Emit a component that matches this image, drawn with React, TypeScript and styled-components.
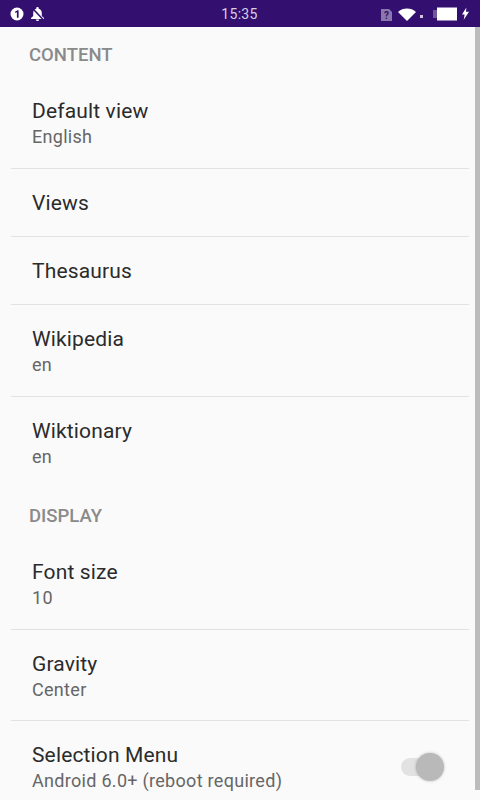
import React from "react";
import styled, { createGlobalStyle } from "styled-components";

const Global = createGlobalStyle`
  html, body { margin: 0; padding: 0; background: #fafafa; }
  body { font-family: Roboto, "Liberation Sans", sans-serif; }
`;

const Screen = styled.div`
  position: relative;
  width: 480px;
  height: 800px;
  overflow: hidden;
  background: #fafafa;
`;

const StatusBar = styled.header`
  height: 27px;
  background: #330f70;
  color: #fff;
  display: grid;
  grid-template-columns: 1fr auto 1fr;
  align-items: center;
  padding: 0 11px 0 10px;
  box-sizing: border-box;
`;

const StatusGroup = styled.div<{ $end?: boolean }>`
  display: flex;
  align-items: center;
  justify-content: ${(p) => (p.$end ? "flex-end" : "flex-start")};
`;

const Clock = styled.span`
  font-size: 14px;
  color: #d6cfe4;
  letter-spacing: 0.3px;
`;

const List = styled.main`
  display: flex;
  flex-direction: column;
`;

const SectionHeader = styled.h2`
  margin: 0;
  height: 50px;
  box-sizing: border-box;
  padding: 5px 0 0 29px;
  display: flex;
  align-items: center;
  font-size: 18.5px;
  font-weight: 500;
  color: #8a8a8a;
`;

const Row = styled.div<{ $height: number; $last?: boolean }>`
  height: ${(p) => p.$height}px;
  box-sizing: border-box;
  margin: 0 11px;
  padding: 23px 32px 0 21px;
  display: flex;
  align-items: flex-start;
  justify-content: space-between;
  border-bottom: ${(p) => (p.$last ? "none" : "1px solid #e2e2e2")};
`;

const RowText = styled.div`
  display: flex;
  flex-direction: column;
  gap: 4px;
`;

const Title = styled.div`
  font-size: 21px;
  line-height: 22px;
  color: #2b2b2b;
  letter-spacing: 0.15px;
`;

const Subtitle = styled.div`
  font-size: 18px;
  line-height: 22px;
  color: #666;
  letter-spacing: 0.3px;
`;

const Toggle = styled.div`
  position: relative;
  margin-top: 14px;
  width: 36px;
  height: 18px;
  border-radius: 9px;
  background: #e2e2e2;
`;

const Knob = styled.div`
  position: absolute;
  right: -7px;
  top: -5px;
  width: 28px;
  height: 28px;
  border-radius: 50%;
  background: #b9b9b9;
  box-shadow: 0 0 3px rgba(0, 0, 0, 0.25);
`;

const Scrollbar = styled.div`
  position: absolute;
  right: 0;
  top: 27px;
  width: 5px;
  height: 763px;
  background: #bcbcbc;
`;

const Icon = styled.svg<{ $gap?: number; $drop?: number }>`
  display: block;
  flex: none;
  margin-left: ${(p) => p.$gap ?? 0}px;
  margin-top: ${(p) => p.$drop ?? 0}px;
`;

const InfoIcon = () => (
  <Icon width="14" height="14" viewBox="0 0 14 14">
    <circle cx="7" cy="7" r="6.5" fill="#fff" />
    <path d="M5.2 4.6 7.6 3.3h1v7.4H6.9V5.3L5.2 6z" fill="#330f70" />
  </Icon>
);

const BellOffIcon = () => (
  <Icon $gap={6} width="15" height="14" viewBox="0 0 15 14">
    <path d="M7.500 0c.7 0 1.200.5 1.200 1.100v.6c2 .5 3.100 2.200 3.100 4.200v3L14 11v1H1v-1l2.200-2.100v-3c0-2 1.100-3.700 3.100-4.200v-.6C6.300.5 6.800 0 7.500 0z" fill="#fff" />
    <path d="M5.800 12.500h3.400c0 .9-.8 1.500-1.700 1.500s-1.700-.6-1.700-1.500z" fill="#fff" />
    <path d="M2 .8 13 12.500" stroke="#330f70" strokeWidth="1.500" />
  </Icon>
);

const SimIcon = () => (
  <Icon $drop={2} width="11" height="12" viewBox="0 0 11 12">
    <path d="M0 0h8L11 3v9H0z" fill="#8b78ab" />
    <text x="5.500" y="10" fontSize="10" fontWeight="700" textAnchor="middle" fontFamily="Roboto, sans-serif" fill="#330f70">?</text>
  </Icon>
);

const WifiIcon = () => (
  <Icon $gap={6} $drop={1} width="18" height="13" viewBox="0 0 18 13">
    <path d="M0 4C2.500 1.500 5.500.5 9 .5s6.500 1 9 3.500l-9 9z" fill="#fff" />
  </Icon>
);

const Dot = styled.span`
  width: 3px;
  height: 3px;
  background: #cfc7de;
  margin: 6px 0 0 4px;
  flex: none;
`;

const BatteryIcon = () => (
  <Icon $gap={10} width="24" height="14" viewBox="0 0 24 14">
    <rect x="0" y="3" width="4" height="8" fill="#6f5a95" />
    <rect x="4" y="0.500" width="20" height="13" fill="#fff" />
  </Icon>
);

const BoltIcon = () => (
  <Icon $gap={5} width="7" height="13" viewBox="0 0 8 14">
    <path d="M5 0 0 8h3l-1 6 6-9H4.500z" fill="#fff" />
  </Icon>
);

type Item = { title: string; subtitle?: string; height: number; last?: boolean };

const content: Item[] = [
  { title: "Default view", subtitle: "English", height: 92 },
  { title: "Views", height: 68 },
  { title: "Thesaurus", height: 68 },
  { title: "Wikipedia", subtitle: "en", height: 91.5 },
  { title: "Wiktionary", subtitle: "en", height: 91.5, last: true },
];

const display: Item[] = [
  { title: "Font size", subtitle: "10", height: 91.5 },
  { title: "Gravity", subtitle: "Center", height: 91.5 },
];

const Entry = ({ title, subtitle, height, last, children }: Item & { children?: React.ReactNode }) => (
  <Row $height={height} $last={last}>
    <RowText>
      <Title>{title}</Title>
      {subtitle && <Subtitle>{subtitle}</Subtitle>}
    </RowText>
    {children}
  </Row>
);

export default function App() {
  return (
    <Screen>
      <Global />
      <StatusBar>
        <StatusGroup>
          <InfoIcon />
          <BellOffIcon />
        </StatusGroup>
        <Clock>15:35</Clock>
        <StatusGroup $end>
          <SimIcon />
          <WifiIcon />
          <Dot />
          <BatteryIcon />
          <BoltIcon />
        </StatusGroup>
      </StatusBar>
      <List>
        <SectionHeader>CONTENT</SectionHeader>
        {content.map((i) => (
          <Entry key={i.title} {...i} />
        ))}
        <SectionHeader>DISPLAY</SectionHeader>
        {display.map((i) => (
          <Entry key={i.title} {...i} />
        ))}
        <Entry title="Selection Menu" subtitle="Android 6.0+ (reboot required)" height={91} last>
          <Toggle>
            <Knob />
          </Toggle>
        </Entry>
      </List>
      <Scrollbar />
    </Screen>
  );
}
